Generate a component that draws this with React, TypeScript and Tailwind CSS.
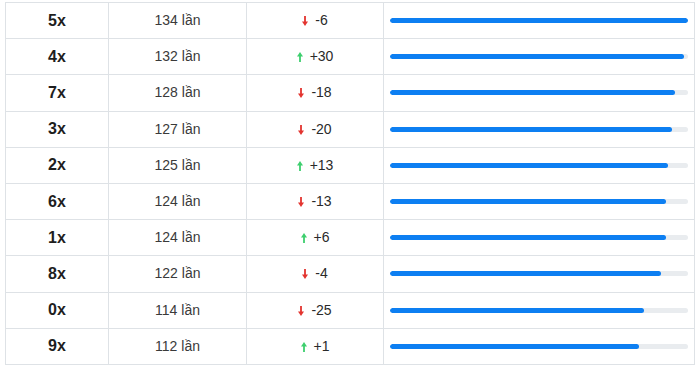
import React from 'react';

type Row = { num: string; count: number; delta: number };

const rows: Row[] = [
  { num: '5x', count: 134, delta: -6 },
  { num: '4x', count: 132, delta: 30 },
  { num: '7x', count: 128, delta: -18 },
  { num: '3x', count: 127, delta: -20 },
  { num: '2x', count: 125, delta: 13 },
  { num: '6x', count: 124, delta: -13 },
  { num: '1x', count: 124, delta: 6 },
  { num: '8x', count: 122, delta: -4 },
  { num: '0x', count: 114, delta: -25 },
  { num: '9x', count: 112, delta: 1 },
];

const MAX = 134;

const Arrow: React.FC<{ up: boolean }> = ({ up }) => (
  <svg
    width="6"
    height="10"
    viewBox="0 0 6 10"
    className={up ? 'inline-block mr-[7px] align-[-1px] text-[#3ecf6e]' : 'inline-block mr-[7px] align-[-1px] text-[#e3342f]'}
  >
    {up ? (
      <g fill="currentColor">
        <polygon points="0,4.5 3,0 6,4.5" />
        <rect x="2.1" y="4" width="1.8" height="6" />
      </g>
    ) : (
      <g fill="currentColor">
        <rect x="2.1" y="0" width="1.8" height="6" />
        <polygon points="0,5.5 6,5.5 3,10" />
      </g>
    )}
  </svg>
);

const App: React.FC = () => {
  return (
    <div className="bg-white w-[700px] h-[367px] overflow-hidden pt-[2px] pl-[5px] font-['Liberation_Sans',Arial,sans-serif]">
      <table className="border-collapse w-[690px] table-fixed">
        <colgroup>
          <col className="w-[103px]" />
          <col className="w-[138px]" />
          <col className="w-[137px]" />
          <col />
        </colgroup>
        <tbody>
          {rows.map((r) => {
            const up = r.delta > 0;
            return (
              <tr key={r.num} className="h-[36.2px]">
                <td className="border border-[#dee2e6] text-center text-[16px] font-bold text-[#1e1e1e]">
                  {r.num}
                </td>
                <td className="border border-[#dee2e6] text-center text-[14px] text-[#3a3a3a]">
                  {r.count} lần
                </td>
                <td className="border border-[#dee2e6] text-center text-[14px] text-[#2a2a2a]">
                  <Arrow up={up} />
                  {up ? '+' + r.delta : r.delta}
                </td>
                <td className="border border-[#dee2e6] px-[6px]">
                  <div className="h-[5px] w-full rounded-full bg-[#e9ecef] overflow-hidden">
                    <div
                      className="h-full rounded-full bg-[#0d7ff2]"
                      style={{ width: `${(r.count / MAX) * 100}%` }}
                    />
                  </div>
                </td>
              </tr>
            );
          })}
        </tbody>
      </table>
    </div>
  );
};

export default App;
